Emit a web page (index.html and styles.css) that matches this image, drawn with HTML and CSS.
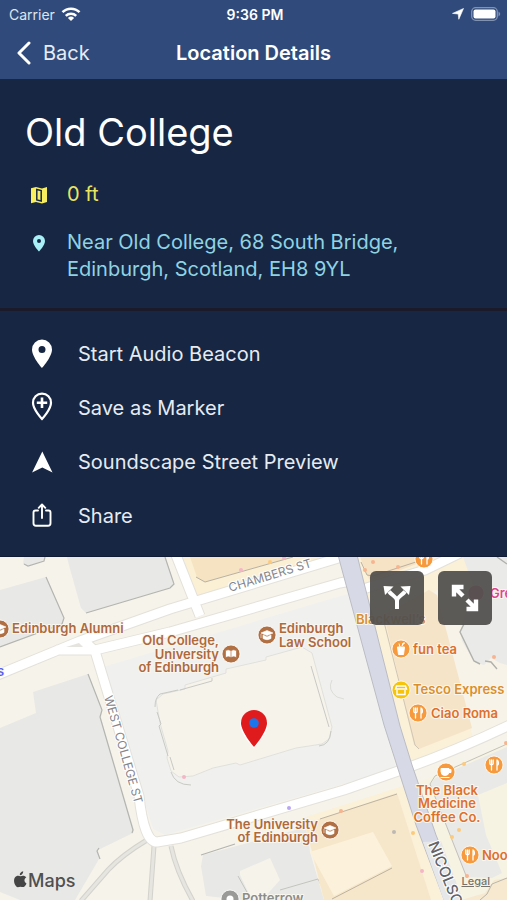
FILE: index.html
```html
<!DOCTYPE html>
<html lang="en">
<head>
<meta charset="utf-8">
<meta name="viewport" content="width=device-width, initial-scale=1">
<title>Location Details</title>
<link rel="stylesheet" href="styles.css">
</head>
<body>
<header class="top">
  <div class="status">
    <div class="status-left">
      <span class="carrier">Carrier</span>
      <svg width="20" height="16" viewBox="0 0 20 16" aria-hidden="true"><g fill="none" stroke="#fff" stroke-width="2.5"><path d="M1.5 6.2a12 12 0 0 1 17 0"/><path d="M4.8 9.8a7.4 7.4 0 0 1 10.400 0"/></g><path d="M6.900 11.900a4.500 4.500 0 0 1 6.200 0L10 15z" fill="#fff"/></svg>
    </div>
    <time>9:36 PM</time>
    <div class="status-right">
      <svg width="12" height="12" viewBox="0 0 12 12" aria-hidden="true"><path d="M11.500.5 6.800 11.300 6.200 6 .5 5.400z" fill="#fff" stroke="#fff" stroke-width=".6"/></svg>
      <svg width="30" height="14" viewBox="0 0 30 14" aria-hidden="true"><rect x=".7" y=".7" width="25.600" height="12.600" rx="4" fill="none" stroke="#8092b2" stroke-width="1.300"/><rect x="2.500" y="2.500" width="22" height="9" rx="2" fill="#fff"/><path d="M27.500 4.500q3.500 2.500 0 5z" fill="#8092b2"/></svg>
    </div>
  </div>
  <nav class="nav">
    <a class="back" href="#"><svg width="16" height="24" viewBox="0 0 16 24" aria-hidden="true"><path d="M13 2 3 12l10 10" fill="none" stroke="#fff" stroke-width="3" stroke-linecap="round" stroke-linejoin="round"/></svg>Back</a>
    <h1 class="nav-title">Location Details</h1>
  </nav>
</header>
<main>
  <section class="info">
    <h2 class="place">Old College</h2>
    <div class="fact distance">
      <svg width="28" height="28" viewBox="-2 -2 28 28" aria-hidden="true"><path d="M4 5.300 9 4l6 1.500L20 4v15l-5 1.500L9 19l-5 1.300z" fill="#f9ef5e"/><path d="M9.800 6.500 14.200 7.600v10.400l-4.400-1.100z" fill="none" stroke="#172743" stroke-width="1.500"/></svg>
      <span>0 ft</span>
    </div>
    <div class="fact address">
      <svg width="28" height="28" viewBox="-2 -2 28 28" aria-hidden="true"><path fill-rule="evenodd" d="M12 4a6 6 0 0 0-6 6c0 4.500 6 10.500 6 10.500s6-6 6-10.500a6 6 0 0 0-6-6zm0 4a2 2 0 1 1 0 4 2 2 0 0 1 0-4z" fill="#a9eff7"/></svg>
      <span>Near Old College, 68 South Bridge, Edinburgh, Scotland, EH8 9YL</span>
    </div>
  </section>
  <section class="actions">
    <button class="action" type="button"><svg width="28" height="32" viewBox="0 0 28 32" aria-hidden="true"><path fill-rule="evenodd" d="M14 1.500A10 10 0 0 0 4 11.500C4 19 14 30 14 30s10-11 10-18.500a10 10 0 0 0-10-10zm0 6.600a3.500 3.500 0 1 1 0 7 3.500 3.500 0 0 1 0-7z" fill="#fff"/></svg>Start Audio Beacon</button>
    <button class="action" type="button"><svg width="28" height="32" viewBox="0 0 28 32" aria-hidden="true"><path d="M14 1.600A9 9 0 0 0 5 10.800C5 17.500 14 27 14 27s9-9.500 9-16.200a9 9 0 0 0-9-9.200z" fill="none" stroke="#fff" stroke-width="2.200"/><path d="M14 5.500v10.400M8.800 10.700h10.400" stroke="#fff" stroke-width="2.600"/></svg>Save as Marker</button>
    <button class="action" type="button"><svg width="28" height="32" viewBox="0 0 28 32" aria-hidden="true"><path d="M14.300 5.500 24.500 26.500l-10.200-5-10.200 5z" fill="#fff"/></svg>Soundscape Street Preview</button>
    <button class="action" type="button"><svg width="28" height="32" viewBox="0 0 28 32" aria-hidden="true"><g fill="none" stroke="#fff" stroke-width="1.900" stroke-linecap="round" stroke-linejoin="round"><path d="M10 10.500H7.500a2 2 0 0 0-2 2v10.800a2.500 2.500 0 0 0 2.500 2.500h12a2.500 2.500 0 0 0 2.500-2.500V12.500a2 2 0 0 0-2-2H18M14 18V4.800M10.700 7.800 14 4.500l3.300 3.300"/></g></svg>Share</button>
  </section>
  <section class="map" aria-label="Map">
    <svg class="canvas" viewBox="0 557 507 343" role="img" aria-label="Map of Old College and nearby streets">
      <defs>
        <g id="fork"><path d="M-4.200-5v3.200a1.700 1.700 0 0 0 3.400 0V-5M-2.500-5V5M3-5V5M3-5c2 1 2 5 0 5.500" fill="none" stroke="#fff" stroke-width="1.300" stroke-linecap="round"/></g>
        <g id="cap"><path d="M-6-2 0-4.500 6-2 0 .5zM-4 0v3.500q4 2.500 8 0V0L0 2zM-6-1v4" fill="#fff" stroke="#fff" stroke-width=".6"/></g>
      </defs>
      <rect y="557" width="507" height="343" fill="#f6f3ea"/>
      <!-- land blocks -->
      <path d="M183 557h160l-146 42z" fill="#fbefd4"/>
      <g fill="#e8e8e6">
        <path d="M24 557h21l-1 3-16 6-5-2z"/>
        <path d="M0 590l46-13 18 41-2 6-62 23z"/>
        <path d="M67 557h98l9 26-2 4-86 26-5-5-11-39z"/>
        <path d="M0 728l36-15-3-21 55-18 14 36-1 8 33 112-1 3-35 17 1 9-24 41H20l-20-8z"/>
        <path d="M203 855l104-28 3 25 14 48h-80l-38-4-5-30z"/>
      </g>
      <g fill="none" stroke="#b4b4b0" stroke-width="1.200">
        <path d="M24 564l4 2 16-5 1-4M46 577l18 41-2 6-62 23M86 613l84-25 4-4-9-27M88 674l14 36-2 7 33 113-1 3M99 848l-2 3 3 8M201 855l34-11"/>
      </g>
      <path d="M103 667 340 596l8-2 48 174-56 17-175 50-12-6z" fill="#f0f1ef"/>
      <path d="M156 700l7-6 22-5v-4l41-12v-4l40-9v-3l36-10 10 6 20 74-3 12-7 5-26 4-56 17-4-2-23 5-20 8-14 1-8-6-4-13 1-7-8-28z" fill="#f6f3eb" stroke="#e1e1dc"/>
      <path d="M155 707q0-9 5-13l18-4M157 712l4 12-2 2 9 30M170 757l4 13M171 772q4 13 20 13M311 666l18 61M331 731q-1 14-12 15M180 690l32-9v-3" fill="none" stroke="#c9c9c4"/>
      <path d="M332 680q-5 10 5 17l7 2" fill="none" stroke="#dcdcd8"/>
      <path d="M190 557h102l-87 25-8-5z" fill="#f6e3c1"/><path d="M196 577l9 5 88-25" fill="none" stroke="#b7b1a4"/>
      <path d="M240 871l30-13 10 22-18 20h-10l-12-25z" fill="#f6f3ea"/>
      <path d="M238 876l10 18M280 890l38-11 4 8" fill="none" stroke="#c4c4bf"/>
      <!-- eastern shops -->
      <path d="M355 557h152v171l-95 40z" fill="#fbf0d8"/>
      <path d="M434 592l20-12 53-23v171l-33 14z" fill="#f7f3e8"/>
      <path d="M360 557h75l-45 17-20 7z" fill="#f6e3c5"/><path d="M361 562l6 13 6 1 52-17" fill="none" stroke="#b9b0a0"/>
      <path d="M384 615l45-25 8 5 35 133-53 21-5-4z" fill="#f5e4c8"/>
      <path d="M384 622l31 123 4 4" fill="none" stroke="#cfc6b4"/>
      <path d="M463 557h44v108l-7-2-9-5-7 7-10-3-12-21-2-10 14-44z" fill="#eaeae8"/>
      <path d="M464 624l-4 8 14 29 6 3M485 661l6 1 6 7M497 557l10 7" fill="none" stroke="#b0b0ac" stroke-width="1.400"/>
      <path d="M413 785l94-42v157h-45z" fill="#f7f3e3"/>
      <path d="M430 785l5-7 72-31v36l-29 12 8 40 16 38-10 5-26-1z" fill="#e9e9e7"/>
      <path d="M507 744l-72 32-5 8 37 94" fill="none" stroke="#c3c1ba"/>
      <path d="M461 900h46v-22l-13 2-9 13z" fill="#f6e9d0"/>
      <path d="M480 900l7-6 5-10 15-6" fill="none" stroke="#b9b5aa"/>
      <path d="M303 818l100-32 40 114H324z" fill="#fbf0d8"/>
      <path d="M305 824l92-31 34 107H324z" fill="#f6e7cb"/>
      <path d="M310 852l63-20 19 34-58 30z" fill="#fcf2dc"/>
      <path d="M320 819l77-25M332 899l60-31" stroke="#bdb3a1" fill="none"/>
      <!-- footpaths -->
      <g fill="none" stroke="#d3d2cc" stroke-width="5"><path d="M147 840q-25 15-39 30l-27 31M154 846l-4 55M171 846q5 25 22 55"/></g>
      <g fill="none" stroke="#e6e5df" stroke-width="3"><path d="M147 840q-25 15-39 30l-27 31M154 846l-4 55M171 846q5 25 22 55"/></g>
      <!-- streets -->
      <g fill="none" stroke="#e3e1da" stroke-width="11" stroke-linejoin="round">
        <path d="M-5 676l85-35 90-32 185-56M56 650h39l75-18 170-49 10-2M360 590l65-20 35-17M174 550l26 66M81 638l14 13 44 145q5 46 18 46l24-4 163-48 60-21q54-19 110-46"/>
      </g>
      <g fill="none" stroke="#fff" stroke-width="9" stroke-linejoin="round">
        <path d="M-5 676l85-35 90-32 185-56M56 650h39l75-18 170-49 10-2M360 590l65-20 35-17M174 550l26 66M81 638l14 13 44 145q5 46 18 46l24-4 163-48 60-21q54-19 110-46"/>
      </g>
      <path d="M66 647l13-4 4 4z" fill="#e5e4df"/>
      <path d="M338 555l46 170 15 47 17 53 29 77h18l-27-67-24-70-12-39-43-171z" fill="#d7dae6" stroke="#babcc3"/>
      <path d="M423 842l18-1 22 60h-19z" fill="#e6e7e8"/>
      <!-- minor places -->
      <g fill="#f8b48f"><circle cx="365" cy="570" r="2"/><circle cx="373" cy="562" r="2"/><circle cx="398" cy="567" r="2"/><circle cx="494" cy="657" r="2"/><circle cx="341" cy="811" r="2"/><circle cx="467" cy="876" r="2"/><circle cx="506" cy="743" r="2"/></g>
      <g fill="#fdca7d"><circle cx="270" cy="562" r="2"/><circle cx="464" cy="764" r="2"/><circle cx="413" cy="833" r="2"/><circle cx="459" cy="830" r="2"/><circle cx="452" cy="837" r="2"/></g>
      <g fill="#f5b5c7"><circle cx="241" cy="570" r="2"/><circle cx="184" cy="777" r="2"/><circle cx="422" cy="871" r="2"/><circle cx="284" cy="558" r="2"/></g>
      <circle cx="289" cy="808" r="2" fill="#b9a6f5"/><circle cx="394" cy="832" r="2" fill="#bdb8b1"/>
      <!-- street names -->
      <g class="street">
        <text transform="translate(230 592) rotate(-17)">CHAMBERS ST</text>
        <text transform="translate(104 697) rotate(74)">WEST COLLEGE ST</text>
        <text class="street-major" transform="translate(428 844) rotate(68)">NICOLSON ST</text>
      </g>
      <!-- place names -->
      <g class="poi campus">
        <text x="12" y="633">Edinburgh Alumni</text>
        <text class="end" x="219" y="645">Old College,</text><text class="end" x="219" y="659">University</text><text class="end" x="219" y="672">of Edinburgh</text>
        <text x="279" y="633">Edinburgh</text><text x="279" y="647">Law School</text>
        <text class="end" x="318" y="829">The University</text><text class="end" x="318" y="842">of Edinburgh</text>
      </g>
      <g class="poi food">
        <text class="shop" x="356" y="624">Blackwell’s</text>
        <text x="413" y="654">fun tea</text><text class="shop" x="413" y="694">Tesco Express</text><text x="431" y="718">Ciao Roma</text>
        <text class="mid" x="447" y="795">The Black</text><text class="mid" x="447" y="808">Medicine</text><text class="mid" x="447" y="822">Coffee Co.</text>
        <text x="482" y="860">Noodle</text>
      </g>
      <text class="poi gift" x="490" y="598">Greyfriars</text>
      <text class="poi stop" x="-3" y="676">s</text>
      <text class="poi grey" x="242" y="903">Potterrow</text>
      <g stroke="#fff" stroke-width=".8">
        <g fill="#b17043"><circle cx="0" cy="629" r="9"/><circle cx="231" cy="654" r="9"/><circle cx="267" cy="635" r="9"/><circle cx="330" cy="830" r="9"/></g>
        <g fill="#f69a3d"><circle cx="401" cy="649" r="9"/><circle cx="418" cy="713" r="9"/><circle cx="446" cy="772" r="9"/><circle cx="494" cy="765" r="9"/><circle cx="470" cy="855" r="9"/><circle cx="424" cy="559" r="9"/></g>
        <circle cx="401" cy="690" r="9" fill="#f6c40d"/><circle cx="230" cy="899" r="9" fill="#9a9a98"/><circle cx="476" cy="593" r="8" fill="#d74b8c"/>
      </g>
      <use href="#cap" x="0" y="629"/><use href="#cap" x="267" y="635"/><use href="#cap" x="330" y="830"/>
      <path d="M231 650.500q-3-1.500-5.500 0v7q3-1.500 5.500 0 2.500-1.500 5.500 0v-7q-3-1.500-5.500 0v7" fill="#fff" stroke="#b17043" stroke-width=".7"/>
      <use href="#fork" x="418" y="713"/><use href="#fork" x="494" y="765"/><use href="#fork" x="470" y="855"/><use href="#fork" x="424" y="559"/>
      <path d="M397.500 647h7l-1 7.500h-5zM400 647l-1-3.500M402 646l1-3h2" fill="#fff" stroke="#fff"/>
      <path d="M396.500 686h9l1 3h-11zM397 690v4.500h8V690" fill="none" stroke="#fff" stroke-width="1.400"/>
      <path d="M441 768.500h8v3q0 4-4 4t-4-4zM449 769.500h2v3h-2M440.500 777.500h9" fill="#fff" stroke="#fff"/>
      <circle cx="230" cy="899" r="3.500" fill="#fff"/>
      <!-- selected location -->
      <path d="M254 711a14 14 0 0 0-14 13.500c0 10 14 23.500 14 23.500s14-13.500 14-23.500A14 14 0 0 0 254 711z" fill="#fff"/>
      <path d="M254 710a13 13 0 0 0-13 13c0 9 13 24 13 24s13-15 13-24a13 13 0 0 0-13-13z" fill="#e01b1e"/>
      <circle cx="254" cy="723" r="4.800" fill="#1b75ed"/>
      <!-- map credit -->
      <path d="M20.500 876.300c-2-1-4.300-.7-5.600 1.200-1.700 2.800-.6 6.800 1.400 9 1.400 1.300 2.600.2 4.200.2s2.500 1 4-.2c1-.9 1.700-2 2-3-2.600-1.400-2.700-4.600-.2-6.200-1.200-1.600-3.500-2-5.800-1zM19.800 875.300c-.2-2 1.200-3.600 3.400-4 .2 2.200-1.400 4-3.400 4z" fill="#454545"/>
      <text class="credit" x="28" y="887">Maps</text>
    </svg>
    <div class="map-tools">
      <button class="tool" type="button" aria-label="Nearby intersections"><svg width="30" height="30" viewBox="0 0 30 30" aria-hidden="true"><path d="M15 26v-8c0-4-5-5.500-8-9.500M15 18c0-4 5-5.500 8-9.500" fill="none" stroke="#fff" stroke-width="4"/><path d="M1.500 3 11.500 3.500 3 12zM28.500 3 18.500 3.500l8.500 8.500z" fill="#fff"/></svg></button>
      <button class="tool" type="button" aria-label="Expand map"><svg width="30" height="30" viewBox="0 0 30 30" aria-hidden="true"><path d="M4 13.500V4h9.500M4.500 4.500l8.500 8.500M26 16.500V26h-9.500M25.500 25.500 17 17" fill="none" stroke="#fff" stroke-width="4.400"/></svg></button>
    </div>
    <a class="legal" href="#">Legal</a>
  </section>
</main>
</body>
</html>
```

FILE: styles.css
```css
* { box-sizing: border-box; }
body {
  margin: 0;
  background: #172743;
  color: #fff;
  font-family: Inter, "Liberation Sans", sans-serif;
}
h1, h2 { margin: 0; font-weight: inherit; }
svg { display: block; flex: none; }
button { border: 0; font: inherit; color: inherit; cursor: pointer; }

.top { background: #304b7b; height: 79px; }
.status {
  display: grid;
  grid-template-columns: 1fr auto 1fr;
  align-items: center;
  height: 28px;
  padding: 0 6px 0 9px;
  font-size: 14px;
}
.status time { font-weight: 600; }
.status-left { display: flex; align-items: center; gap: 6px; }
.carrier { color: #dfe4ee; }
.status-right { display: flex; align-items: center; justify-content: flex-end; gap: 7px; }

.nav {
  display: grid;
  grid-template-columns: 1fr auto 1fr;
  align-items: center;
  height: 49px;
  padding: 0 16px;
}
.back {
  display: flex;
  align-items: center;
  gap: 11px;
  color: #e6ebf5;
  font-size: 20px;
  text-decoration: none;
}
.nav-title { font-size: 20px; font-weight: 600; }

.info {
  display: flex;
  flex-direction: column;
  padding: 29px 25px 25px;
  border-bottom: 3px solid #1b1a2a;
}
.place { margin-bottom: 25px; font-size: 38px; line-height: 48px; }
.fact { display: flex; gap: 14px; font-size: 20px; line-height: 27px; }
.distance { color: #ece45f; margin-bottom: 20px; }
.address { color: #8fd3e3; }
.address span { max-width: 360px; }

.actions { display: flex; flex-direction: column; padding: 16px 0 13px; }
.action {
  display: flex;
  align-items: center;
  gap: 22px;
  height: 54px;
  padding: 0 28px;
  background: none;
  color: #e6ebf2;
  font-size: 20px;
  text-align: left;
}

.map { position: relative; border-top: 1px solid #101b33; overflow: hidden; }
.canvas { width: 100%; height: auto; }
.map-tools { position: absolute; top: 14px; right: 15px; display: flex; gap: 14px; }
.tool {
  display: grid;
  place-items: center;
  width: 54px;
  height: 54px;
  padding: 0;
  border-radius: 6px;
  background: rgba(82, 80, 78, 0.94);
}
.legal {
  position: absolute;
  right: 17px;
  bottom: 12px;
  color: #77736b;
  font-size: 11px;
  font-weight: 500;
}

.street { font-size: 12px; fill: #85868a; stroke: #fff; stroke-width: 2px; paint-order: stroke; }
.street-major { font-size: 15px; font-weight: 500; fill: #626469; }
.poi {
  font-size: 13px;
  font-weight: 600;
  stroke: #faf7ef;
  stroke-width: 2px;
  stroke-linejoin: round;
  paint-order: stroke;
}
.end { text-anchor: end; }
.mid { text-anchor: middle; }
.campus { fill: #ae693d; }
.food { fill: #de702c; }
.shop { fill: #db8f2c; }
.gift { fill: #e0468f; }
.stop { fill: #5c5ff0; }
.grey { fill: #8c8c8a; }
.credit { font-size: 18px; font-weight: 500; fill: #505050; }
```
